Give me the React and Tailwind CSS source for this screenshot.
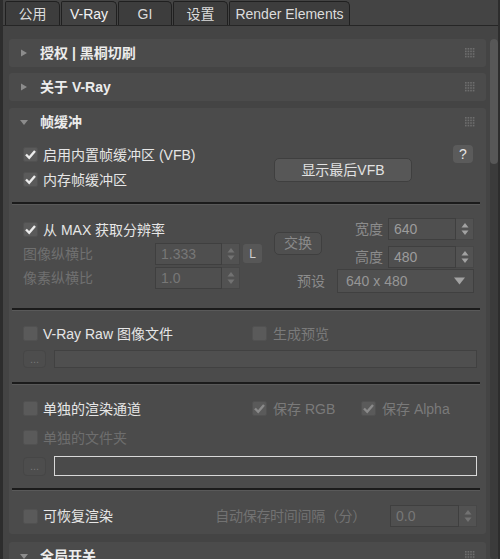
import React from 'react';

const TABS = [
  { label: '公用', w: 'w-[55px]' },
  { label: 'V-Ray', w: 'w-[56px]', active: true },
  { label: 'GI', w: 'w-[54px]' },
  { label: '设置', w: 'w-[55px]' },
  { label: 'Render Elements', w: 'w-[121px]' },
];

function GridIcon() {
  const dots = [];
  for (let r = 0; r < 4; r++) {
    for (let c = 0; c < 4; c++) {
      dots.push(<rect key={r + '-' + c} x={c * 2.6} y={r * 2.6} width="1.6" height="1.6" fill="#6e6e6e" />);
    }
  }
  return (
    <svg width="10" height="10" viewBox="0 0 10 10" className="shrink-0">
      {dots}
    </svg>
  );
}

function Tri({ open }) {
  return open ? (
    <svg width="8" height="7" viewBox="0 0 8 7" className="shrink-0">
      <path d="M0 1 L8 1 L4 6 Z" fill="#8c8c8c" />
    </svg>
  ) : (
    <svg width="8" height="8" viewBox="0 0 8 8" className="shrink-0">
      <path d="M1 0.5 L7 4 L1 7.5 Z" fill="#8c8c8c" />
    </svg>
  );
}

function Check({ checked, disabled }) {
  return (
    <div className="w-[15px] h-[15px] shrink-0 rounded-[2px] border border-[#515151] bg-[#5a5a5a] flex items-center justify-center">
      {checked && (
        <svg width="13" height="13" viewBox="0 0 13 13">
          <path d="M2 6.5 L5.2 9.8 L11 3" fill="none" stroke={disabled ? '#8a8a8a' : '#ececec'} strokeWidth="2.4" />
        </svg>
      )}
    </div>
  );
}

function Arrows({ dim }) {
  const c = dim ? '#727272' : '#a2a2a2';
  return (
    <svg width="8" height="14" viewBox="0 0 8 14">
      <path d="M0.5 5.5 L4 1 L7.5 5.5 Z" fill={c} />
      <path d="M0.5 8.5 L4 13 L7.5 8.5 Z" fill={c} />
    </svg>
  );
}

function Spin({ value, box, dim }) {
  return (
    <div className="flex h-[22px]">
      <div className={`${box} h-full border border-[#3f3f3f] bg-[#4f4f4f] pl-[5px] flex items-center ${dim ? 'text-[#777]' : 'text-[#9c9c9c]'}`}>
        {value}
      </div>
      <div className="w-[18px] h-full bg-[#525252] border-y border-r border-[#474747] flex items-center justify-center">
        <Arrows dim={dim} />
      </div>
    </div>
  );
}

function Rollout({ title, open, children }) {
  return (
    <div className="rounded-[3px] bg-[#4b4b4b] shrink-0">
      <div className="h-[28px] flex items-center pl-[11px] pr-[11px]">
        <Tri open={open} />
        <span className="ml-[12px] font-bold text-[#ececec]">{title}</span>
        <span className="ml-auto"><GridIcon /></span>
      </div>
      {children}
    </div>
  );
}

function Sep() {
  return <div className="ml-[3px] mr-[6px] h-[3px] border-t-2 border-[#1b1b1b] border-b border-b-[#595959]" />;
}

export default function App() {
  return (
    <div className="w-[500px] h-[559px] overflow-hidden bg-[#444444] border-l-[3px] border-r-2 border-[#2d2d2d] flex flex-col text-[14px] leading-none font-[Liberation_Sans,Noto_Sans_CJK_SC,sans-serif]">
      {/* Tabs */}
      <div className="h-[26px] shrink-0 flex items-end gap-px pl-[2px] border-b border-[#262626]">
        {TABS.map(t => (
          <div
            key={t.label}
            className={`${t.w} h-[24px] rounded-tl-[2px] rounded-tr-[5px] border border-b-0 border-[#202020] flex items-center justify-center ${t.active ? 'bg-[#424242] text-[#f2f2f2]' : 'bg-[#3d3d3d] text-[#dcdcdc]'}`}
          >
            {t.label}
          </div>
        ))}
      </div>

      <div className="flex-1 flex min-h-0">
        {/* Rollouts */}
        <div className="w-[477px] ml-[6px] pt-[13px] flex flex-col">
          <Rollout title="授权 | 黑桐切刷" />
          <div className="h-[6px] shrink-0" />
          <Rollout title="关于 V-Ray" />
          <div className="h-[7px] shrink-0" />
          <Rollout title="帧缓冲" open>
            <div className="h-[66px] flex">
              <div className="w-[265px] pl-[14px] pt-[11px] flex flex-col gap-[10px]">
                <div className="flex items-center gap-[5px] text-[#e6e6e6]">
                  <Check checked /> 启用内置帧缓冲区 (VFB)
                </div>
                <div className="flex items-center gap-[5px] text-[#e6e6e6]">
                  <Check checked /> 内存帧缓冲区
                </div>
              </div>
              <div className="mt-[22px] w-[138px] h-[24px] rounded-[5px] border border-[#3f3f3f] bg-[#575757] text-[#e2e2e2] flex items-center justify-center">
                显示最后VFB
              </div>
              <div className="ml-[41px] mt-[9px] w-[20px] h-[18px] rounded-[4px] bg-[#5b5b5b] text-[#e6e6e6] text-[14px] flex items-center justify-center">
                ?
              </div>
            </div>
            <Sep />

            <div className="h-[103px] flex">
              <div className="w-[253px] pl-[14px] pt-[17px] flex flex-col">
                <div className="flex items-center gap-[5px] text-[#e6e6e6] h-[15px]">
                  <Check checked /> 从 MAX 获取分辨率
                </div>
                <div className="flex items-center mt-[6px] h-[21px]">
                  <span className="w-[132px] text-[#707070]">图像纵横比</span>
                  <Spin value="1.333" box="w-[67px]" dim />
                  <div className="ml-[3px] w-[19px] h-[19px] rounded-[3px] bg-[#575757] text-[#cfcfcf] text-[12px] flex items-center justify-center">L</div>
                </div>
                <div className="flex items-center mt-[3px] h-[21px]">
                  <span className="w-[132px] text-[#707070]">像素纵横比</span>
                  <Spin value="1.0" box="w-[67px]" dim />
                </div>
              </div>
              <div className="ml-[12px] w-[200px] pt-[13px] flex flex-col">
                <div className="flex items-center">
                  <div className="w-[48px] h-[23px] rounded-[5px] border border-[#3f3f3f] bg-[#4f4f4f] text-[#8a8a8a] flex items-center justify-center">
                    交换
                  </div>
                  <div className="ml-auto flex flex-col gap-[6px]">
                    <div className="flex items-center gap-[5px]">
                      <span className="text-[#8c8c8c]">宽度</span>
                      <Spin value="640" box="w-[68px]" />
                    </div>
                    <div className="flex items-center gap-[5px]">
                      <span className="text-[#8c8c8c]">高度</span>
                      <Spin value="480" box="w-[68px]" />
                    </div>
                  </div>
                </div>
                <div className="mt-px flex items-center pl-[23px]">
                  <span className="text-[#8c8c8c]">预设</span>
                  <div className="ml-auto w-[137px] h-[24px] border border-[#404040] bg-[#505050] pl-[8px] pr-[8px] flex items-center text-[#969696]">
                    640 x 480
                    <svg width="11" height="8" viewBox="0 0 11 8" className="ml-auto">
                      <path d="M0 0.5 L11 0.5 L5.5 7.5 Z" fill="#a2a2a2" />
                    </svg>
                  </div>
                </div>
              </div>
            </div>
            <Sep />

            <div className="h-[71px] pl-[14px] pt-[15px] flex flex-col">
              <div className="flex items-center h-[15px]">
                <div className="w-[229px] flex items-center gap-[5px] text-[#e6e6e6]">
                  <Check /> V-Ray Raw 图像文件
                </div>
                <div className="flex items-center gap-[6px] text-[#7a7a7a]">
                  <Check /> 生成预览
                </div>
              </div>
              <div className="mt-[9px] flex items-center gap-[8px]">
                <div className="w-[23px] h-[18px] rounded-[4px] border border-[#464646] bg-[#4d4d4d] text-[#767676] text-[11px] flex items-center justify-center">...</div>
                <div className="w-[423px] h-[18px] border border-[#414141] bg-[#4f4f4f]" />
              </div>
            </div>
            <Sep />

            <div className="h-[103px] pl-[14px] pt-[16px] flex flex-col">
              <div className="flex items-center h-[15px]">
                <div className="w-[229px] flex items-center gap-[5px] text-[#e6e6e6]">
                  <Check /> 单独的渲染通道
                </div>
                <div className="w-[109px] flex items-center gap-[6px] text-[#7a7a7a]">
                  <Check checked disabled /> 保存 RGB
                </div>
                <div className="flex items-center gap-[6px] text-[#7a7a7a]">
                  <Check checked disabled /> 保存 Alpha
                </div>
              </div>
              <div className="mt-[14px] flex items-center gap-[5px] h-[15px] text-[#6e6e6e]">
                <Check /> 单独的文件夹
              </div>
              <div className="mt-[11px] flex items-center gap-[8px]">
                <div className="w-[23px] h-[19px] rounded-[4px] border border-[#464646] bg-[#4d4d4d] text-[#767676] text-[11px] flex items-center justify-center">...</div>
                <div className="w-[423px] h-[20px] border border-[#d9d9d9] bg-[#4a4a4a]" />
              </div>
            </div>
            <Sep />

            <div className="h-[43px] pl-[14px] pr-[9px] pt-[13px] flex items-start">
              <div className="h-[24px] flex items-center gap-[5px] text-[#e6e6e6]">
                <Check /> 可恢复渲染
              </div>
              <div className="ml-auto h-[24px] flex items-center gap-[24px]">
                <span className="text-[#727272] tracking-[-0.3px]">自动保存时间间隔（分）</span>
                <Spin value="0.0" box="w-[69px]" dim />
              </div>
            </div>
          </Rollout>
          <div className="h-[8px] shrink-0" />
          <Rollout title="全局开关" open />
        </div>

        {/* Scrollbar */}
        <div className="ml-[4px] w-[8px] pt-[13px] flex flex-col">
          <div className="flex-1 rounded-[4px] bg-[#3b3b3b] flex flex-col">
            <div className="h-[125px] rounded-[4px] bg-[#575757]" />
          </div>
        </div>
      </div>
    </div>
  );
}
